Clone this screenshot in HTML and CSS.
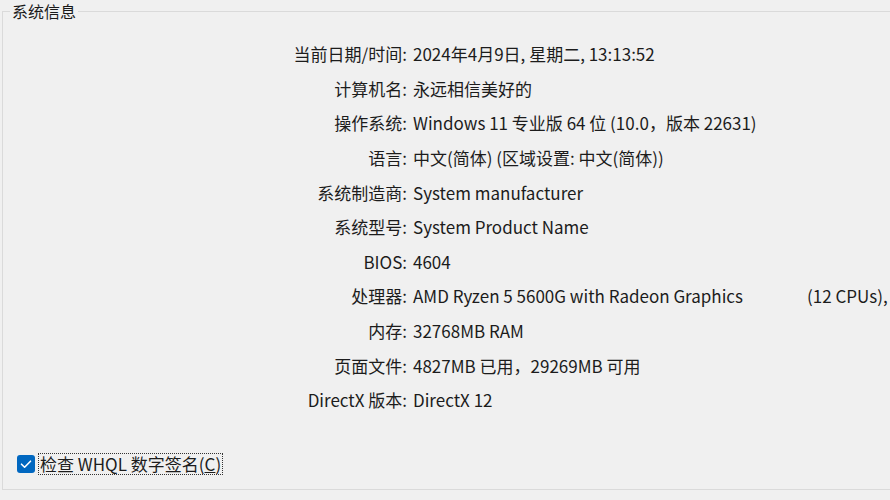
FILE: index.html
```html
<!DOCTYPE html>
<html lang="zh-CN">
<head>
<meta charset="utf-8">
<link rel="stylesheet" href="styles.css">
</head>
<body>
<fieldset class="group">
  <legend class="title">系统信息</legend>
  <div class="info">
    <div class="label">当前日期/时间:</div><div class="value">2024年4月9日, 星期二, 13:13:52</div>
    <div class="label">计算机名:</div><div class="value">永远相信美好的</div>
    <div class="label">操作系统:</div><div class="value">Windows 11 专业版 64 位 (10.0，版本 22631)</div>
    <div class="label">语言:</div><div class="value">中文(简体) (区域设置: 中文(简体))</div>
    <div class="label">系统制造商:</div><div class="value">System manufacturer</div>
    <div class="label">系统型号:</div><div class="value">System Product Name</div>
    <div class="label">BIOS:</div><div class="value">4604</div>
    <div class="label">处理器:</div><div class="value"><span class="cpu">AMD Ryzen 5 5600G with Radeon Graphics</span><span>(12 CPUs),</span></div>
    <div class="label">内存:</div><div class="value">32768MB RAM</div>
    <div class="label">页面文件:</div><div class="value">4827MB 已用，29269MB 可用</div>
    <div class="label">DirectX 版本:</div><div class="value">DirectX 12</div>
  </div>
  <div class="check-row">
    <span class="checkbox"><svg viewBox="0 0 18 18" width="18" height="18"><path d="M4.5 9.2 L7.6 12.2 L13.5 6.2" fill="none" stroke="#fff" stroke-width="1.6" stroke-linecap="round" stroke-linejoin="round"/></svg></span>
    <span class="check-label">检查 WHQL 数字签名(<u>C</u>)</span>
  </div>
</fieldset>
</body>
</html>
```

FILE: styles.css
```css
html, body {
  margin: 0;
  padding: 0;
  background: #f0f0f0;
  overflow: hidden;
  width: 890px;
  height: 500px;
}
body {
  font-family: "Noto Sans CJK SC", "Noto Sans", sans-serif;
  font-size: 17px;
  color: #1c1c1c;
}
.group {
  margin: 1px 0 0 2px;
  padding: 0;
  width: 888px;
  min-width: 0;
  height: 489px;
  border: 1px solid #dadada;
  border-right: none;
  box-sizing: border-box;
  display: flex;
  flex-direction: column;
}
.title {
  margin-left: 7px;
  padding: 0 2px;
  line-height: 20px;
  font-size: 16px;
  color: #1a1a1a;
}
.info {
  display: grid;
  grid-template-columns: 404px 1fr;
  column-gap: 6px;
  grid-auto-rows: 34.6px;
  align-items: center;
  margin-top: 16px;
  line-height: 22px;
}
.label {
  text-align: right;
  white-space: nowrap;
}
.value {
  white-space: nowrap;
}
.cpu {
  display: inline-block;
  width: 394px;
}
.check-row {
  display: flex;
  align-items: center;
  gap: 3px;
  margin-top: 35px;
  margin-left: 14px;
}
.checkbox {
  width: 18px;
  height: 18px;
  border-radius: 3px;
  background: #0067c0;
  display: flex;
}
.check-label {
  border: 1px dotted #333;
  padding: 0 1px;
  line-height: 20px;
}
```
